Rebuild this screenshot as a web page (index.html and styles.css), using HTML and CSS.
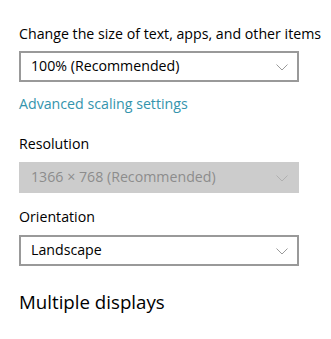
FILE: index.html
```html
<!DOCTYPE html>
<html lang="en">
<head>
<meta charset="utf-8">
<title>Display settings</title>
<link rel="stylesheet" href="styles.css">
</head>
<body>
<main class="page">
  <h2 class="section-title clipped">Scale and layout</h2>

  <label class="field-label first">Change the size of text, apps, and other items</label>
  <div class="select">
    <span class="select-value">100% (Recommended)</span>
    <svg class="chevron" width="12" height="7" viewBox="0 0 12 7"><polyline points="0.5,0.5 6,6 11.5,0.5" fill="none" stroke="#9a9a9a" stroke-width="1"/></svg>
  </div>

  <a class="link" href="#">Advanced scaling settings</a>

  <label class="field-label res">Resolution</label>
  <div class="select disabled">
    <span class="select-value">1366 × 768 (Recommended)</span>
    <svg class="chevron" width="12" height="7" viewBox="0 0 12 7"><polyline points="0.5,0.5 6,6 11.5,0.5" fill="none" stroke="#b0b0b0" stroke-width="1"/></svg>
  </div>

  <label class="field-label orient">Orientation</label>
  <div class="select">
    <span class="select-value">Landscape</span>
    <svg class="chevron" width="12" height="7" viewBox="0 0 12 7"><polyline points="0.5,0.5 6,6 11.5,0.5" fill="none" stroke="#9a9a9a" stroke-width="1"/></svg>
  </div>

  <h2 class="section-title multi">Multiple displays</h2>
</main>
</body>
</html>
```
FILE: styles.css
```css
html, body {
  margin: 0;
  padding: 0;
  background: #ffffff;
}

body {
  font-family: "Open Sans", "Noto Sans", sans-serif;
  color: #000000;
  overflow: hidden;
}

.page {
  display: flex;
  flex-direction: column;
  align-items: flex-start;
  padding-left: 19px;
  width: 312px;
}

.section-title {
  font-size: 18.7px;
  font-weight: 400;
  line-height: 28px;
  margin: 0;
  color: #000000;
}

.clipped {
  margin-top: -25px;
  height: 28px;
}

.field-label {
  display: block;
  font-size: 14.2px;
  line-height: 20px;
  white-space: nowrap;
}

.first {
  margin-top: 21px;
  margin-bottom: 7px;
}

.res {
  margin-top: 20px;
  margin-bottom: 8px;
}

.orient {
  margin-top: 14px;
  margin-bottom: 8px;
}

.select {
  box-sizing: border-box;
  width: 280px;
  height: 31px;
  border: 2px solid #999999;
  background: #ffffff;
  display: flex;
  align-items: center;
  justify-content: space-between;
  padding: 0 9px 1px 10px;
  font-size: 14.2px;
  line-height: 20px;
}

.select.disabled {
  background: #cccccc;
  border-color: #cccccc;
  color: #8c8c8c;
}

.chevron {
  display: block;
  margin-top: 2px;
}

.link {
  margin-top: 12px;
  font-size: 14.2px;
  line-height: 20px;
  color: #3494ad;
  text-decoration: none;
}

.multi {
  margin-top: 22px;
}
```
